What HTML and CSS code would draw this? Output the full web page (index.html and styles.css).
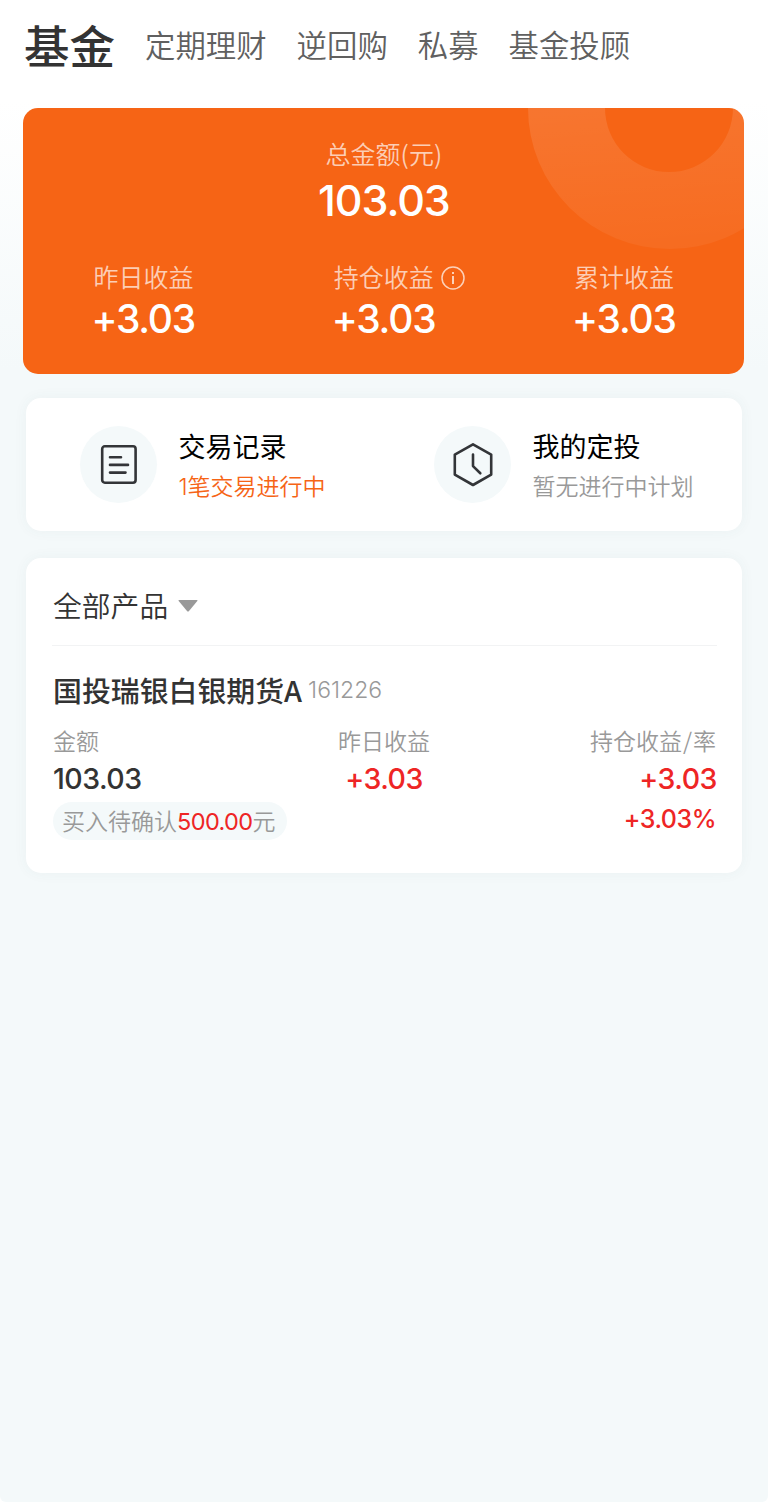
FILE: index.html
```
<!DOCTYPE html>
<html lang="zh-CN">
<head>
    <meta charset="UTF-8">
    <meta name="viewport" content="width=device-width, initial-scale=1.0">
    <title>基金</title>
    <link rel="stylesheet" href="styles.css">
</head>
<body>
    <div class="page">
        <nav class="tabs">
            <a class="tab active">基金</a>
            <a class="tab">定期理财</a>
            <a class="tab">逆回购</a>
            <a class="tab">私募</a>
            <a class="tab">基金投顾</a>
        </nav>

        <section class="summary">
            <svg class="ring" width="284" height="142" viewBox="0 0 284 142">
                <defs>
                    <linearGradient id="ringFill" x1="0.3" y1="0" x2="0.5" y2="1">
                        <stop offset="0" stop-color="#fff" stop-opacity="0.11"/>
                        <stop offset="1" stop-color="#fff" stop-opacity="0.05"/>
                    </linearGradient>
                </defs>
                <path fill="url(#ringFill)" d="M0 0a142 141 0 0 0 284 0h-79a64 64 0 0 1-128 0z"/>
            </svg>
            <div class="total">
                <div class="label">总金额(元)</div>
                <div class="total-value">103.03</div>
            </div>
            <div class="profits">
                <div class="profit">
                    <div class="label">昨日收益</div>
                    <div class="profit-value">+3.03</div>
                </div>
                <div class="profit">
                    <div class="label">持仓收益
                        <svg class="info" width="24" height="24" viewBox="0 0 24 24" fill="none" stroke="currentColor">
                            <circle cx="12" cy="12" r="11" stroke-width="1.5"/>
                            <path d="M12 10v8M12 6v2" stroke-width="2"/>
                        </svg>
                    </div>
                    <div class="profit-value">+3.03</div>
                </div>
                <div class="profit">
                    <div class="label">累计收益</div>
                    <div class="profit-value">+3.03</div>
                </div>
            </div>
        </section>

        <section class="card actions">
            <div class="action">
                <div class="action-icon">
                    <svg width="44" height="44" viewBox="0 0 44 44" fill="none" stroke="#333538" stroke-width="2.6" stroke-linecap="round">
                        <rect x="5.2" y="3.3" width="33.4" height="36.4" rx="2.6"/>
                        <path d="M13 14.2h11M13 21.9h18M13 29.6h15.5"/>
                    </svg>
                </div>
                <div class="action-text">
                    <div class="action-title">交易记录</div>
                    <div class="action-desc highlight">1笔交易进行中</div>
                </div>
            </div>
            <div class="action">
                <div class="action-icon">
                    <svg width="44" height="44" viewBox="0 0 44 44" fill="none" stroke="#333538" stroke-width="2.6" stroke-linecap="round" stroke-linejoin="round">
                        <path d="M22 1.3 40.2 11.6v20L22 42 3.8 31.6v-20z"/>
                        <path d="M22 11.6v11.5l7.3 7.2"/>
                    </svg>
                </div>
                <div class="action-text">
                    <div class="action-title">我的定投</div>
                    <div class="action-desc">暂无进行中计划</div>
                </div>
            </div>
        </section>

        <section class="card products">
            <div class="filter">全部产品
                <svg class="arrow" width="20" height="12" viewBox="0 0 20 12">
                    <path fill="#999" d="M1.2 0h17.6q1.4 0 .5 1.1L11 11q-1 1-2 0L.7 1.1Q-.2 0 1.2 0z"/>
                </svg>
            </div>
            <div class="fund">
                <div class="fund-head">
                    <span class="fund-name">国投瑞银白银期货A</span>
                    <span class="fund-code">161226</span>
                </div>
                <div class="fund-data">
                    <div class="col">
                        <div class="col-label">金额</div>
                        <div class="col-value">103.03</div>
                        <div class="pending">买入待确认<b>500.00</b>元</div>
                    </div>
                    <div class="col center">
                        <div class="col-label">昨日收益</div>
                        <div class="col-value up">+3.03</div>
                    </div>
                    <div class="col right">
                        <div class="col-label">持仓收益<span class="slash">/</span>率</div>
                        <div class="col-value up">+3.03</div>
                        <div class="col-rate up">+3.03%</div>
                    </div>
                </div>
            </div>
        </section>
    </div>
</body>
</html>
```
FILE: styles.css
```
:root {
    --orange: #f66415;
    --red: #ee2525;
    --dark: #333333;
    --gray: #999999;
    --bg: #f4f9fa;
}

* {
    margin: 0;
    padding: 0;
    box-sizing: border-box;
}

body {
    background: white;
    font-family: "Noto Sans CJK SC", sans-serif;
    font-weight: 350;
    font-feature-settings: "calt" 0;
    color: var(--dark);
    white-space: nowrap;
}

.page {
    height: 1502px;
    padding: 0 24px;
    background: linear-gradient(#ffffff 100px, var(--bg) 370px);
    border-radius: 0 0 6px 6px;
    overflow: hidden;
}

.tabs {
    display: flex;
    align-items: center;
    gap: 30px;
    height: 88px;
    margin-bottom: 20px;
}

.tab {
    font-size: 30.4px;
    line-height: 44px;
    color: #606060;
}

.tab.active {
    font-size: 45.5px;
    font-weight: 500;
    color: var(--dark);
}

/* total amount card */
.summary {
    position: relative;
    height: 266px;
    margin: 0 -0.4px 0 -0.6px;
    padding-top: 27px;
    border-radius: 15px;
    background: var(--orange);
    color: white;
    overflow: hidden;
}

.ring {
    position: absolute;
    top: 0;
    right: -68px;
}

.label {
    font-size: 25px;
    line-height: 36px;
    color: rgba(255, 255, 255, 0.7);
}

.total {
    text-align: center;
}

.total-value {
    font-family: Inter, sans-serif;
    font-size: 43px;
    font-weight: 500;
    line-height: 58px;
    letter-spacing: -1.1px;
}

.profits {
    display: grid;
    grid-template-columns: repeat(3, 1fr);
    margin-top: 29px;
}

.profit {
    padding-left: 70px;
}

.info {
    margin-left: 2px;
    vertical-align: -3px;
}

.profit-value {
    margin-left: -2px;
    font-family: Inter, sans-serif;
    font-size: 39px;
    font-weight: 500;
    line-height: 50px;
    letter-spacing: -1.2px;
}

.card {
    margin: 24px 2px 0;
    border-radius: 15px;
    background: white;
    box-shadow: 0 0 14px rgba(60, 90, 100, 0.05);
}

/* shortcuts */
.actions {
    display: grid;
    grid-template-columns: 354px 1fr;
    align-items: center;
    height: 133px;
    padding-left: 54.4px;
}

.action {
    display: flex;
    align-items: center;
    gap: 21px;
}

.action-icon {
    display: flex;
    align-items: center;
    justify-content: center;
    width: 77px;
    height: 77px;
    border-radius: 50%;
    background: var(--bg);
}

.action-title {
    font-size: 27px;
    font-weight: 400;
    line-height: 40px;
    color: black;
}

.action-desc {
    font-family: Inter, "Noto Sans CJK SC", sans-serif;
    font-size: 23px;
    line-height: 38px;
    padding-top: 2px;
    margin-bottom: -2px;
    color: var(--gray);
}

.action-desc.highlight {
    color: var(--orange);
}

/* product list */
.products {
    height: 315px;
    margin-top: 27px;
    padding: 10px 25px 0 26px;
}

.filter {
    height: 78px;
    padding-left: 1px;
    border-bottom: 1px solid #f2f3f4;
    font-size: 28.8px;
    font-weight: 350;
    line-height: 74px;
}

.arrow {
    margin-left: 3px;
    vertical-align: 5px;
}

.fund {
    padding-left: 1px;
}

.fund-head {
    display: flex;
    align-items: center;
    gap: 6px;
    height: 42px;
    margin-top: 22px;
}

.fund-name {
    font-size: 28.9px;
    font-weight: 500;
}

.fund-code {
    padding-top: 2px;
    font-family: Inter, sans-serif;
    font-size: 23px;
    color: var(--gray);
}

.fund-data {
    display: grid;
    grid-template-columns: repeat(3, minmax(0, 1fr));
    margin-top: 13px;
}

.center {
    position: relative;
    text-align: center;
    padding-right: 2px;
}

.right {
    text-align: right;
}

.col-label {
    font-size: 23px;
    line-height: 34px;
    color: var(--gray);
}

.right .col-label {
    padding-right: 1px;
}

.slash {
    padding: 0 1px;
}

.col-value {
    font-family: Inter, sans-serif;
    font-size: 28.5px;
    font-weight: 500;
    line-height: 43px;
    letter-spacing: -0.5px;
}

.col-rate {
    padding-right: 1px;
    font-family: Inter, sans-serif;
    font-size: 25px;
    font-weight: 500;
    line-height: 38px;
    letter-spacing: -0.5px;
}

.up {
    color: var(--red);
}

.pending {
    display: inline-block;
    height: 38px;
    margin-top: 2px;
    padding: 0 11px 0 9px;
    border-radius: 19px;
    background: var(--bg);
    font-size: 23px;
    line-height: 36px;
    color: var(--gray);
}

.pending b {
    font-family: Inter, sans-serif;
    font-size: 23.5px;
    font-weight: 400;
    letter-spacing: -0.6px;
    color: var(--red);
}
```
